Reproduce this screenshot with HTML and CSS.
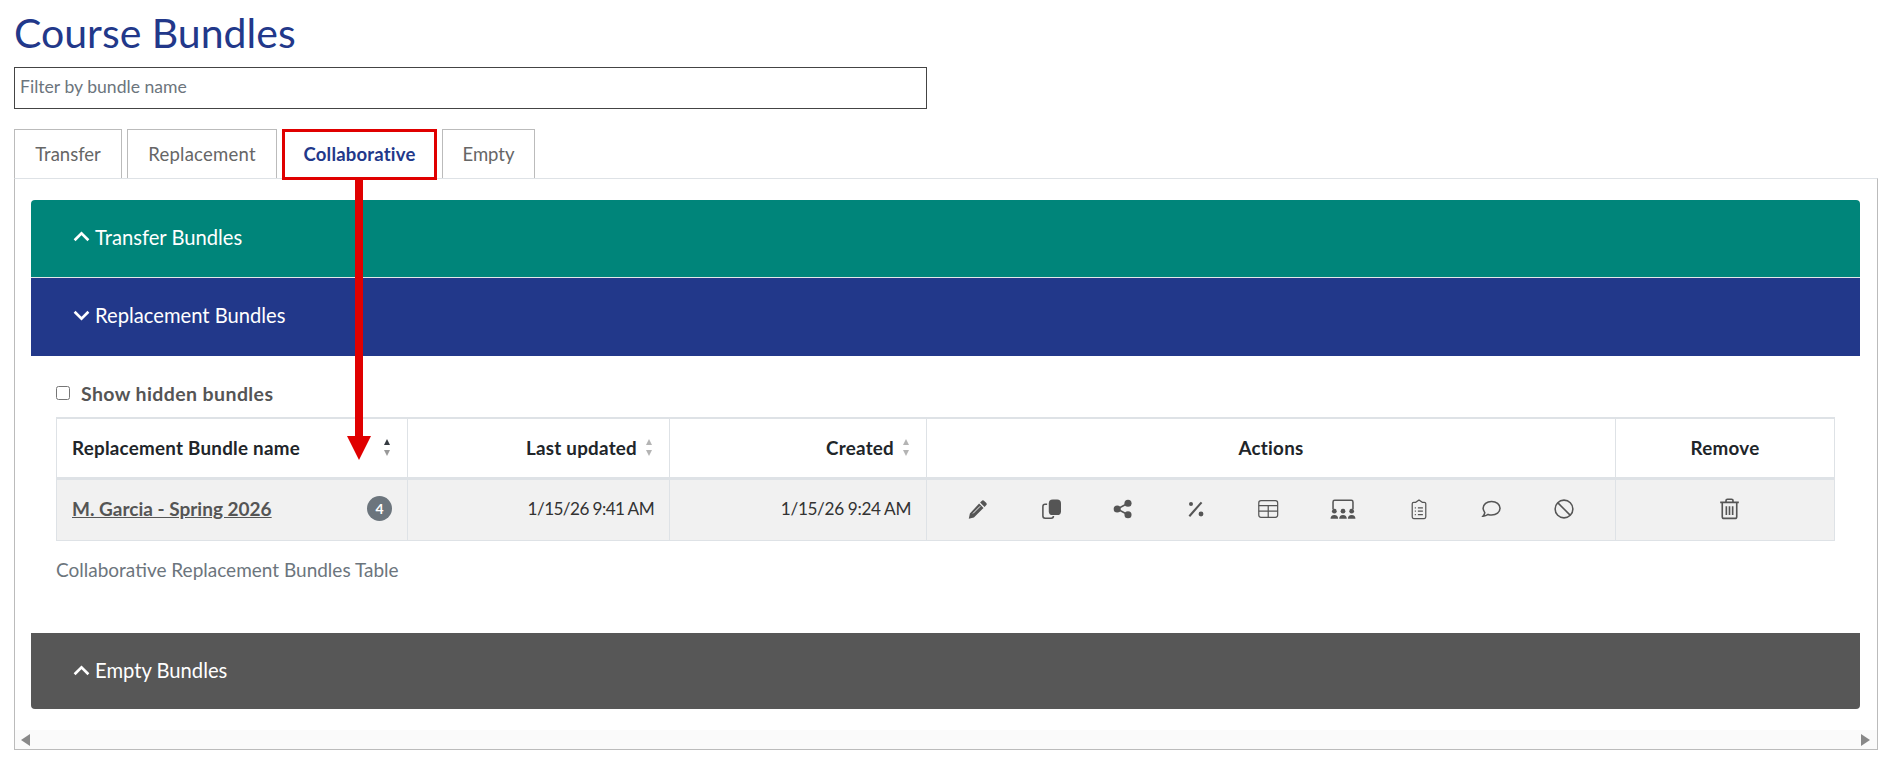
FILE: index.html
```html
<!DOCTYPE html>
<html lang="en">
<head>
<meta charset="utf-8">
<title>Course Bundles</title>
<link rel="stylesheet" href="styles.css">
</head>
<body>
<div class="page">
  <h1 class="title">Course Bundles</h1>
  <input class="filter" type="text" placeholder="Filter by bundle name">
  <ul class="tabs">
    <li class="tab tab-transfer">Transfer</li>
    <li class="tab tab-replacement">Replacement</li>
    <li class="tab tab-collab">Collaborative</li>
    <li class="tab tab-empty">Empty</li>
  </ul>
  <div class="panel">
    <div class="panel-inner">
      <section class="acc acc-teal">
        <svg class="chev" viewBox="0 0 16 10"><path d="M1.500 8.500L8 2l6.500 6.500"/></svg>
        <span>Transfer Bundles</span>
      </section>
      <section class="acc acc-navy">
        <svg class="chev" viewBox="0 0 16 10"><path d="M1.500 1.500L8 8l6.500-6.500"/></svg>
        <span>Replacement Bundles</span>
      </section>
      <div class="acc-body">
        <label class="hidden-toggle"><input type="checkbox"><span>Show hidden bundles</span></label>
        <table class="bundles">
          <colgroup>
            <col class="c1"><col class="c2"><col class="c3"><col class="c4"><col class="c5">
          </colgroup>
          <thead>
            <tr>
              <th class="left"><div class="th-flex th-between"><span>Replacement Bundle name</span><span class="sort sort-asc"><i class="up"></i><i class="down"></i></span></div></th>
              <th class="right"><div class="th-flex th-end"><span>Last updated</span><span class="sort"><i class="up"></i><i class="down"></i></span></div></th>
              <th class="right"><div class="th-flex th-end"><span>Created</span><span class="sort"><i class="up"></i><i class="down"></i></span></div></th>
              <th>Actions</th>
              <th>Remove</th>
            </tr>
          </thead>
          <tbody>
            <tr>
              <td class="name-td"><div class="name-cell"><a class="bundle-link">M. Garcia - Spring 2026</a><span class="badge">4</span></div></td>
              <td class="right date">1/15/26 9:41 AM</td>
              <td class="right date date-wide">1/15/26 9:24 AM</td>
              <td>
                <div class="actions">
                  <svg class="ico" viewBox="0 0 18 18"><path class="fill" d="M12.300 1.700a1.600 1.600 0 0 1 2.300 0l1.700 1.700a1.600 1.600 0 0 1 0 2.300l-1.400 1.400-4-4zM10 4l4 4-8.700 8.700-4.600 1 1-4.600z"/><path class="cut" d="M11 6.500L4.500 13"/></svg>
                  <svg class="ico" viewBox="0 0 18 18"><rect class="fill" x="7" y="0.500" width="11" height="14" rx="3.500"/><path class="line" d="M5.500 4.800H3.700A2 2 0 0 0 1.700 6.800v8.500a2 2 0 0 0 2 2h5.500a2 2 0 0 0 2-2"/></svg>
                  <svg class="ico" viewBox="0 0 18 18"><circle class="fill" cx="3.800" cy="9" r="3.200"/><circle class="fill" cx="13.500" cy="3.800" r="3.200"/><circle class="fill" cx="13.500" cy="14.200" r="3.200"/><path class="line" d="M13.500 3.800L3.800 9l9.700 5.200"/></svg>
                  <svg class="ico" viewBox="0 0 18 18"><path class="line thick" d="M3 15.500L14 3"/><circle class="fill" cx="4.500" cy="4.500" r="1.800"/><circle class="fill" cx="13.500" cy="13.500" r="2.200"/></svg>
                  <svg class="ico" viewBox="0 0 18 18"><rect class="thin" x="0.700" y="1.500" width="17" height="15" rx="2"/><path class="thin" d="M.7 6h17M.7 11h17M9.200 6v10.500"/></svg>
                  <svg class="ico ico-wide" viewBox="0 0 24 18"><path class="line" d="M2.800 9V2.500a1.500 1.500 0 0 1 1.500-1.500h15.400a1.500 1.500 0 0 1 1.500 1.500V9"/><circle class="fill" cx="4" cy="11" r="2.200"/><circle class="fill" cx="12" cy="11" r="2.200"/><circle class="fill" cx="20" cy="11" r="2.200"/><path class="fill" d="M.500 18a3.500 3.500 0 0 1 7 0zM8.500 18a3.500 3.500 0 0 1 7 0zM16.500 18a3.500 3.500 0 0 1 7 0z"/></svg>
                  <svg class="ico" viewBox="0 0 18 18"><path class="thin" d="M6 3H4.200a1.300 1.300 0 0 0-1.300 1.300v12a1.300 1.300 0 0 0 1.300 1.300h9.600a1.300 1.300 0 0 0 1.300-1.300v-12A1.300 1.300 0 0 0 13.800 3H12L9 .8z"/><path class="thin" d="M8 8h4.500M8 11h4.500M8 14h4.500M5.200 8h1M5.200 11h1M5.200 14h1"/></svg>
                  <svg class="ico" viewBox="0 0 18 18"><path class="line" d="M9.500 2.200c4.300 0 7.600 2.700 7.600 6.100s-3.300 6.100-7.600 6.100c-1.100 0-2.200-.2-3.100-.5-1.200.9-2.800 1.500-4.500 1.500.8-.9 1.400-2 1.500-3.100C2.700 11.200 1.900 9.800 1.900 8.300c0-3.400 3.300-6.100 7.600-6.100z"/></svg>
                  <svg class="ico" viewBox="0 0 18 18"><circle class="line" cx="9" cy="9" r="8"/><path class="line" d="M3.500 3.500l11 11"/></svg>
                </div>
              </td>
              <td>
                <div class="remove">
                  <svg class="ico ico-trash" viewBox="0 0 18 18"><path class="line" d="M1 3.800h16M6 3.500V2.300a1.200 1.200 0 0 1 1.200-1.200h3.600A1.200 1.200 0 0 1 12 2.300v1.200M2.800 4v12a1.500 1.500 0 0 0 1.500 1.500h9.400a1.500 1.500 0 0 0 1.500-1.500V4"/><path class="line" d="M6.300 7v7.500M9 7v7.500M11.700 7v7.500"/></svg>
                </div>
              </td>
            </tr>
          </tbody>
        </table>
        <p class="caption">Collaborative Replacement Bundles Table</p>
      </div>
      <section class="acc acc-gray">
        <svg class="chev" viewBox="0 0 16 10"><path d="M1.500 8.500L8 2l6.500 6.500"/></svg>
        <span>Empty Bundles</span>
      </section>
    </div>
    <div class="hscroll"><i class="arrow-left"></i><i class="arrow-right"></i></div>
  </div>
  <div class="callout-box"></div>
  <svg class="callout-arrow" viewBox="0 0 24 280"><path d="M8 0h8v256h8L12 280 0 256h8z"/></svg>
</div>
</body>
</html>
```
FILE: styles.css
```css
* { box-sizing: border-box; }
html, body { margin: 0; padding: 0; background: #fff; }
body { font-family: Lato, "Open Sans", sans-serif; color: #212529; font-size: 17px; overflow: hidden; }
.page { position: relative; width: 1886px; height: 768px; padding: 0 8px 0 14px; }
.title { margin: 0; height: 67px; font-size: 41px; line-height: 65px; font-weight: 400; color: #22388a; }
.filter { display: block; width: 913px; height: 42px; border: 1px solid #444; padding: 0 5px 3px; font: 17.600px Lato, sans-serif; color: #6c757d; outline: 0; border-radius: 0; background: #fff; }
.filter::placeholder { color: #6c757d; opacity: 1; }
.tabs { display: flex; gap: 5px; list-style: none; margin: 20px 0 0; padding: 0; height: 49px; position: relative; z-index: 1; }
.tab { height: 49px; border: 1px solid #bbb; border-bottom: 0; display: flex; align-items: center; justify-content: center; color: #666; font-size: 18.500px; background: #fff; }
.tab-transfer { width: 108px; }
.tab-replacement { width: 150px; letter-spacing: .25px; }
.tab-collab { width: 155px; border: 0; color: #22388a; font-weight: 700; letter-spacing: .2px; }
.tab-empty { width: 93px; }
.panel { height: 572px; border: 1px solid #bbb; border-top-color: #dee2e6; display: flex; flex-direction: column; }
.panel-inner { flex: 1; padding: 21px 17px 0 16px; }
.acc { height: 78px; display: flex; align-items: center; padding: 0 0 4px 42px; color: #fff; font-size: 20.200px; gap: 5px; }
.chev { width: 17px; height: 11px; flex: none; }
.chev path { fill: none; stroke: #fff; stroke-width: 2.500; }
.acc-teal { background: #00857a; border-radius: 4px 4px 0 0; border-bottom: 1px solid #e4e8e8; }
.acc-navy { background: #22388a; }
.acc-gray { background: #575757; height: 76px; padding-bottom: 2px; border-radius: 0 0 4px 4px; }
.acc-body { height: 277px; padding: 0 21px 0 25px; background: #fff; }
.hidden-toggle { display: flex; align-items: center; gap: 11px; height: 61px; padding-top: 13px; font-weight: 700; color: #555; font-size: 19.500px; letter-spacing: .4px; }
.hidden-toggle input { margin: 0; width: 14px; height: 14px; }
.bundles { width: 1778px; table-layout: fixed; border-collapse: collapse; font-size: 18.800px; }
.c1 { width: 351px; } .c2 { width: 262px; } .c3 { width: 257px; } .c4 { width: 689px; } .c5 { width: 219px; }
.bundles th { height: 60px; background: #fff; border: 1px solid #dee2e6; border-top-width: 2px; border-bottom-width: 3px; padding: 0 16px; font-weight: 700; color: #212529; text-align: center; letter-spacing: .25px; }
.bundles .left { padding-left: 15px; text-align: left; }
.bundles td { height: 62px; background: #f1f1f1; border: 1px solid #dee2e6; padding: 0 16px 2px; color: #333; }
.bundles .name-td { padding-left: 15px; padding-right: 15px; }
.bundles .right { text-align: right; }
.bundles .date { font-size: 17.200px; letter-spacing: -.6px; padding-right: 15px; }
.bundles .date-wide { letter-spacing: -.35px; }
.th-flex { display: flex; align-items: center; gap: 9px; }
.th-between { justify-content: space-between; }
.th-end { justify-content: flex-end; }
.sort { display: flex; flex-direction: column; gap: 5px; width: 7px; flex: none; }
.sort i { display: block; width: 0; height: 0; border-left: 3.500px solid transparent; border-right: 3.500px solid transparent; }
.sort .up { border-bottom: 6px solid #b4b4b4; }
.sort .down { border-top: 6px solid #b4b4b4; }
.sort-asc .up { border-bottom-color: #343a40; }
.sort-asc .down { border-top-color: #999; }
.name-cell { display: flex; align-items: center; justify-content: space-between; }
.bundle-link { color: #555; font-weight: 700; text-decoration: underline; font-size: 19px; }
.badge { width: 25px; height: 25px; border-radius: 50%; background: #6c757d; color: #fff; font-size: 14px; font-weight: 700; display: flex; align-items: center; justify-content: center; }
.actions { display: flex; align-items: center; justify-content: center; gap: 52.400px; }
.remove { display: flex; justify-content: center; padding-left: 8px; }
.ico { width: 20px; height: 20px; flex: none; display: block; overflow: visible; }
.ico-wide { width: 26px; }
.ico-trash { width: 21px; height: 21px; }
.fill { fill: #555; stroke: none; }
.line { fill: none; stroke: #555; stroke-width: 1.400; }
.thick { stroke-width: 1.900; }
.thin { fill: none; stroke: #555; stroke-width: 1.100; }
.cut { fill: none; stroke: #f1f1f1; stroke-width: .9; }
.caption { margin: 18px 0 0; color: #6c757d; font-size: 19px; line-height: 22px; }
.hscroll { height: 19px; background: #fafafa; position: relative; display: flex; justify-content: space-between; align-items: center; padding: 0 7px 0 6px; }
.arrow-left { width: 0; height: 0; border-top: 6px solid transparent; border-bottom: 6px solid transparent; border-right: 9px solid #888; }
.arrow-right { width: 0; height: 0; border-top: 6px solid transparent; border-bottom: 6px solid transparent; border-left: 9px solid #888; }
.callout-box { position: absolute; left: 282px; top: 129px; width: 155px; height: 51px; border: 3px solid #e00000; z-index: 2; }
.callout-arrow { position: absolute; left: 347px; top: 180px; width: 24px; height: 280px; fill: #e00000; z-index: 2; }
```
